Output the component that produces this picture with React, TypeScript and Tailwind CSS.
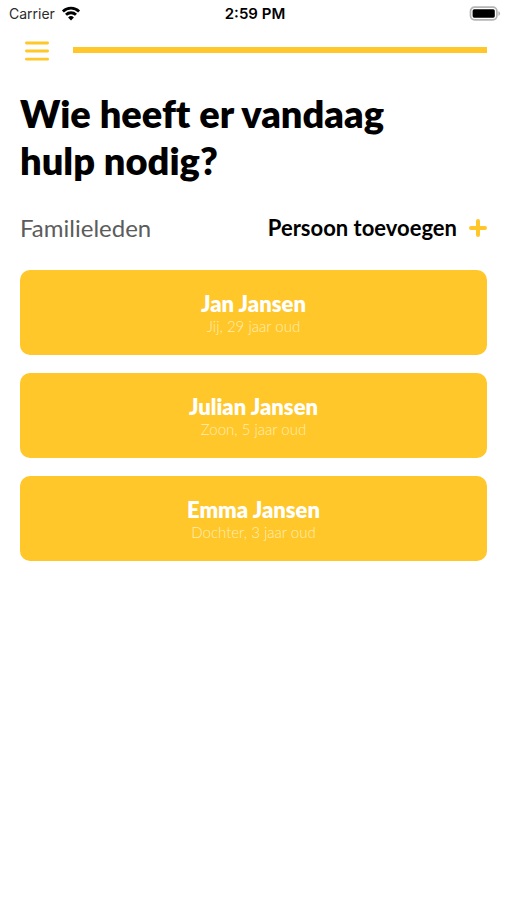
import React from 'react';

interface FamilyMember {
  id: number;
  name: string;
  relation: string;
  age: number;
}

const familyMembers: FamilyMember[] = [
  { id: 1, name: 'Jan Jansen', relation: 'Jij', age: 29 },
  { id: 2, name: 'Julian Jansen', relation: 'Zoon', age: 5 },
  { id: 3, name: 'Emma Jansen', relation: 'Dochter', age: 3 },
];

const WifiIcon = () => (
  <svg className="w-5 h-4" viewBox="0 0 20 16" fill="none" stroke="currentColor" strokeWidth="2.8" aria-hidden="true">
    <path d="M1.9 5.4a11.6 11.6 0 0 1 16.2 0" />
    <path d="M5 8.8a7.1 7.1 0 0 1 10 0" />
    <path d="M10 14.6 7.1 11.5a4.1 4.1 0 0 1 5.8 0z" fill="currentColor" stroke="none" />
  </svg>
);

const BatteryIcon = () => (
  <svg className="w-8 h-4" viewBox="0 0 32 16" aria-hidden="true">
    <rect x="1.5" y="1.2" width="26.4" height="12.6" rx="4" fill="#fff" stroke="#b5b5b5" strokeWidth="1.7" />
    <rect x="3.6" y="3.3" width="22.2" height="8.4" rx="1.6" fill="#000" />
    <path d="M29.4 5.2c2.2.6 2.2 4 0 4.6z" fill="#b5b5b5" />
  </svg>
);

const StatusBar = () => (
  <div className="grid grid-cols-3 items-center h-7 pl-[9px] pr-1.5 font-['Inter',sans-serif] text-sm text-black">
    <div className="flex items-center gap-1.5">
      <span className="text-[#2b2b2b]">Carrier</span>
      <WifiIcon />
    </div>
    <span className="text-center text-[15px] font-semibold">2:59 PM</span>
    <div className="flex justify-end">
      <BatteryIcon />
    </div>
  </div>
);

const MemberCard: React.FC<{ member: FamilyMember }> = ({ member }) => (
  <button
    type="button"
    className="w-full h-[85px] flex flex-col items-center justify-center rounded-[10px] bg-[#ffc72a] pt-0.5 text-white"
  >
    <span className="text-[22px] leading-6 font-extrabold">{member.name}</span>
    <span className="text-[15px] leading-5 font-light text-[#ffeeb4]">
      {member.relation}, {member.age} jaar oud
    </span>
  </button>
);

const App: React.FC = () => {
  return (
    <div className="min-h-screen bg-white font-['Lato',sans-serif] text-black">
      <StatusBar />

      <header className="flex items-center gap-6 h-11 pl-[25px] pr-5">
        <button type="button" aria-label="Menu" className="text-[#ffc72a]">
          <svg className="w-6 h-6" viewBox="0 0 24 24" stroke="currentColor" strokeWidth="2.8" strokeLinecap="round">
            <path d="M1.4 5h21.2M1.4 13h21.2M1.4 21.2h21.2" />
          </svg>
        </button>
        <div className="flex-1 h-1.5 bg-[#ffc72a]" />
      </header>

      <main className="px-5 pt-[18px]">
        <h1 className="max-w-[420px] text-[38px] leading-[47px] font-extrabold [font-variant-ligatures:none]">
          Wie heeft er vandaag hulp nodig?
        </h1>

        <div className="flex items-center justify-between pt-7">
          <h2 className="text-2xl leading-8 text-[#5c5c5c]">Familieleden</h2>
          <button type="button" className="flex items-center gap-3 text-[22px] leading-8 font-bold">
            Persoon toevoegen
            <svg className="w-[18px] h-[18px] text-[#ffc72a]" viewBox="0 0 18 18" stroke="currentColor" strokeWidth="4" strokeLinecap="round" aria-hidden="true">
              <path d="M9 2v14M2 9h14" />
            </svg>
          </button>
        </div>

        <section className="flex flex-col gap-[18px] pt-[26px]">
          {familyMembers.map((member) => (
            <MemberCard key={member.id} member={member} />
          ))}
        </section>
      </main>
    </div>
  );
};

export default App;
